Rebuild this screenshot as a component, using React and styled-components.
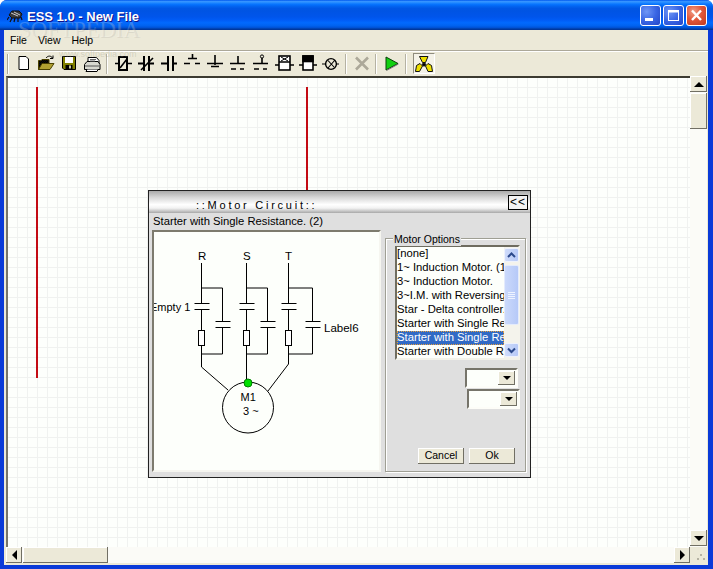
import React from "react";
import styled, { createGlobalStyle } from "styled-components";

const Global = createGlobalStyle`
  html, body { margin: 0; padding: 0; background: #fff; }
  * { box-sizing: border-box; }
  body { font: 11px "Liberation Sans", Arial, sans-serif; color: #000; }
`;

const Win = styled.div`
  position: relative;
  width: 713px;
  height: 569px;
  display: flex;
  flex-direction: column;
  background: #0a3ad8;
  border-radius: 7px 7px 0 0;
  overflow: hidden;
  padding-bottom: 4px;
`;
const TitleBar = styled.div`
  height: 30px;
  flex: none;
  display: flex;
  align-items: center;
  padding: 2px 6px 0 7px;
  background: linear-gradient(180deg,#0058ee 0,#3593ff 5%,#288eff 8%,#127dff 12%,#036ffc 16%,#0262ee 22%,#0057e5 28%,#0054e3 36%,#0055eb 56%,#005bf5 66%,#026afe 76%,#0062ef 86%,#0052d6 92%,#0040ab 96%,#003092 100%);
`;
const TitleText = styled.span`
  margin-left: 4px;
  font: bold 13px "Liberation Sans", sans-serif;
  color: #fff;
  text-shadow: 1px 1px #0f1089;
`;
const WinButtons = styled.div`
  margin-left: auto;
  margin-top: -2px;
  display: flex;
  gap: 2px;
`;
const WinButton = styled.div`
  width: 21px;
  height: 21px;
  border: 1px solid #fff;
  border-radius: 3px;
  display: flex;
  background: ${(p) =>
    p.$close
      ? "radial-gradient(circle at 35% 30%, #f0a08a 0, #e2583a 45%, #c03a1e 100%)"
      : "radial-gradient(circle at 30% 30%, #6f96f5 0, #3a66e4 50%, #2346c8 100%)"};
`;
const Client = styled.div`
  flex: 1;
  margin: 0 5px 0 4px;
  min-height: 0;
  background: #ece9d8;
  display: flex;
  flex-direction: column;
`;
const MenuBar = styled.div`
  height: 20px;
  flex: none;
  display: flex;
  align-items: center;
  gap: 11px;
  padding-left: 6px;
  font-size: 10.5px;
`;
const MenuItem = styled.span``;
const Rule = styled.div`
  height: 2px;
  flex: none;
  background: #aca899;
  border-bottom: 1px solid #fff;
`;
const Toolbar = styled.div`
  height: 24px;
  flex: none;
  display: flex;
  align-items: stretch;
  padding-left: 2px;
`;
const Grip = styled.div`
  width: 2px;
  margin: 2px 3px 2px 1px;
  background: #aca899;
  border-right: 1px solid #fff;
`;
const Tool = styled.div`
  width: 23px;
  height: 22px;
  flex: none;
  svg { display: block; }
`;
const Sep = styled.div`
  width: 2px;
  margin: 2px ${(p) => p.$r}px 2px ${(p) => p.$l}px;
  background: #b5b2a3;
  border-right: 1px solid #fff;
  flex: none;
`;
const Toggle = styled.div`
  width: 22px;
  height: 21px;
  margin-left: 3px;
  margin-top: 1px;
  flex: none;
  border: 1px solid;
  border-color: #8f8c7e #fff #fff #8f8c7e;
  background: #f4f2e8;
  svg { display: block; }
`;
const Workspace = styled.div`
  flex: 1;
  min-height: 0;
  display: grid;
  grid-template-columns: 1fr 17px;
  grid-template-rows: 1fr 16px;
  padding: 0 1px 2px 2px;
`;
const Canvas = styled.div`
  position: relative;
  border-top: 2px solid #3c3a30;
  border-left: 2px solid #77756a;
  background-color: #fdfffc;
  background-image: linear-gradient(#f0f2f0 1px, transparent 1px), linear-gradient(90deg, #f0f2f0 1px, transparent 1px);
  background-size: 10px 10px;
  background-position: 9px 9px;
`;
const RedWire = styled.div`
  position: absolute;
  left: ${(p) => p.$x}px;
  top: 9px;
  width: 2px;
  height: ${(p) => p.$h}px;
  background: #c40c14;
`;
const VScroll = styled.div`
  display: flex;
  flex-direction: column;
  background: #fbfbf7;
  padding-bottom: 1px;
`;
const HScroll = styled.div`
  display: flex;
  background: #fbfbf7;
`;
const SBtn = styled.div`
  flex: none;
  width: ${(p) => p.$w}px;
  height: ${(p) => p.$h}px;
  margin-top: ${(p) => p.$mt || 0}px;
  margin-left: ${(p) => p.$ml || 0}px;
  background: #ece9d8;
  box-shadow: inset -1px -1px #716f64, inset 1px 1px #fff;
  display: flex;
  align-items: center;
  justify-content: center;
`;
const Corner = styled.div`
  background: #ece9d8;
  svg { display: block; }
`;
const Arrow = styled.div`
  width: 0;
  height: 0;
  border-style: solid;
  ${(p) =>
    ({
      up: "border-width:0 5px 5px 5px;border-color:transparent transparent #000 transparent;",
      down: "border-width:5px 5px 0 5px;border-color:#000 transparent transparent transparent;",
      left: "border-width:5px 5px 5px 0;border-color:transparent #000 transparent transparent;",
      right: "border-width:5px 0 5px 5px;border-color:transparent transparent transparent #000;",
    })[p.$d]}
`;
const Watermark = styled.div`
  position: absolute;
  left: 18px;
  top: 17px;
  font: 23px "Liberation Serif", serif;
  letter-spacing: -0.3px;
  color: rgba(255, 255, 255, 0.2);
  text-shadow: 1px 1px rgba(110, 110, 110, 0.14);
  pointer-events: none;
`;
const WatermarkUrl = styled.div`
  position: absolute;
  left: 59px;
  top: 49px;
  font: 9px "Liberation Sans", sans-serif;
  color: rgba(150, 150, 130, 0.3);
`;

const Dialog = styled.div`
  position: absolute;
  left: 148px;
  top: 190px;
  width: 383px;
  height: 288px;
  border: 1px solid #222;
  background: #dfdfdf;
  display: flex;
  flex-direction: column;
`;
const DlgTitle = styled.div`
  height: 22px;
  flex: none;
  display: flex;
  align-items: center;
  padding: 0 2px 0 47px;
  background: linear-gradient(180deg, #aaaaaa 0, #d8d8d8 30%, #ffffff 62%, #f2f2f2 78%, #a8a8a8 100%);
`;
const DlgTitleText = styled.span`
  font-size: 11px;
  letter-spacing: 2.75px;
  margin-top: 6px;
`;
const Collapse = styled.div`
  margin-left: auto;
  width: 20px;
  height: 15px;
  border: 1px solid #000;
  background: #f3f3f3;
  font-size: 12px;
  line-height: 12px;
  letter-spacing: 1px;
  text-align: center;
`;
const SubTitle = styled.div`
  height: 17px;
  flex: none;
  padding-left: 4px;
  line-height: 16px;
  font-size: 11.25px;
`;
const DlgBody = styled.div`
  flex: 1;
  display: flex;
  padding-left: 3px;
`;
const Panel = styled.div`
  width: 229px;
  height: 242px;
  flex: none;
  border: 2px solid;
  border-color: #7d7b6e #f6f6f0 #f6f6f0 #7d7b6e;
  background: #fdfffb;
  svg { display: block; }
`;
const Group = styled.div`
  position: relative;
  width: 141px;
  height: 234px;
  margin: 8px 0 0 4px;
  border: 1px solid #9f9f94;
  box-shadow: 1px 1px #fff, inset 1px 1px #fff;
  display: flex;
  flex-direction: column;
`;
const Legend = styled.span`
  position: absolute;
  left: 7px;
  top: -6px;
  padding: 0 1px;
  background: #dfdfdf;
  font-size: 10.5px;
  line-height: 13px;
`;
const ListBox = styled.div`
  width: 125px;
  height: 115px;
  margin: 6px 0 0 9px;
  flex: none;
  display: flex;
  border: 2px solid;
  border-color: #6f6d60 #f3f3ea #f3f3ea #6f6d60;
  background: #fdfffb;
`;
const Rows = styled.div`
  width: 107px;
  flex: none;
  overflow: hidden;
`;
const Row = styled.div`
  height: 14px;
  line-height: 13px;
  white-space: nowrap;
  overflow: hidden;
  font-size: 11.25px;
  ${(p) => p.$sel && "background:#316ac5;color:#fff;outline:1px dotted #e8a03c;outline-offset:-1px;"}
`;
const XPBar = styled.div`
  flex: 1;
  display: flex;
  flex-direction: column;
  padding: 1px 1px 1px 0;
  background: #f4f3ec;
`;
const XPBtn = styled.div`
  height: 14px;
  flex: none;
  border-radius: 2px;
  border: 1px solid #eef2fd;
  background: linear-gradient(90deg, #cfdcfb, #b7c9f7);
  display: flex;
  svg { display: block; }
`;
const XPThumb = styled.div`
  height: 60px;
  margin-top: 3px;
  flex: none;
  border-radius: 2px;
  border: 1px solid #e4ebfc;
  background: linear-gradient(90deg, #cbd9fb, #b6c9f8);
  display: flex;
  align-items: center;
  justify-content: center;
  svg { display: block; }
`;
const Spacer = styled.div`
  flex: 1;
`;
const Combo = styled.div`
  width: 53px;
  height: 20px;
  flex: none;
  align-self: flex-end;
  margin-top: ${(p) => p.$mt}px;
  margin-right: ${(p) => p.$mr}px;
  display: flex;
  justify-content: flex-end;
  padding: 1px;
  border: 2px solid;
  border-color: #76746a #fdfdf8 #fdfdf8 #76746a;
  background: #fdfffb;
`;
const ComboBtn = styled.div`
  width: 17px;
  background: #ece9d8;
  box-shadow: inset -1px -1px #716f64, inset 1px 1px #fff;
  display: flex;
  align-items: center;
  justify-content: center;
`;
const Small = styled(Arrow)`
  border-width: 4px 4px 0 4px;
`;
const Buttons = styled.div`
  margin-top: auto;
  display: flex;
  justify-content: flex-end;
  gap: 5px;
  padding: 0 10px 7px 0;
`;
const Btn = styled.div`
  width: 46px;
  height: 16px;
  background: #ece9d8;
  box-shadow: inset -1px -1px #716f64, inset 1px 1px #fff;
  text-align: center;
  line-height: 15px;
  font-size: 10.5px;
`;

/* Toolbar drawings use screen coordinates inside each viewBox. */
const Ico = ({ x, w = 23, children }) => (
  <svg width={w} height="22" viewBox={`${x} 52 ${w} 22`} fill="none" stroke="#000" strokeWidth="1">
    {children}
  </svg>
);

const tools = [
  [12, <path d="M19 56.5H26L28.5 59V69.5H19Z" fill="#fff" />],
  [35, <g>
    <pattern id="dither" width="2" height="2" patternUnits="userSpaceOnUse">
      <rect width="2" height="2" fill="#f4e860" />
      <rect width="1" height="1" fill="#a89c20" />
      <rect x="1" y="1" width="1" height="1" fill="#a89c20" />
    </pattern>
    <path d="M38.5 69.5V60.5H41L42 59.5H49V69.5Z" fill="url(#dither)" stroke="#4a4200" />
    <path d="M38.5 69.5L42 63.5H54L50 69.5Z" fill="#b0a030" stroke="#4a4200" />
    <path d="M46 58C48 55.5 51 55.5 52.5 58M53 55.5V58.5H50" stroke="#000" />
  </g>],
  [58, <g>
    <path d="M62.5 56.5H75.5V69.5H64L62.5 68Z" fill="#808000" stroke="#000" />
    <rect x="65" y="57" width="8" height="6" fill="#fff" stroke="none" />
    <rect x="65.5" y="65" width="7" height="4.5" fill="#000" stroke="none" />
    <rect x="69" y="65.5" width="2" height="3" fill="#c8c8a0" stroke="none" />
  </g>],
  [81, <g>
    <path d="M88 57.5H96.5L99 60.5V64H88Z" fill="#fff" />
    <path d="M84.5 64.5L87 61.5H98L100 64.5V69.5H84.5Z" fill="#d8d8d0" />
    <path d="M87 69.5L86 71.5H97L98 69.5" fill="#fff" />
    <path d="M85 66H99" stroke="#555" />
    <path d="M90 59.5H96M90 61H95" stroke="#666" />
  </g>],
  [111, <g strokeWidth="2">
    <rect x="119" y="57" width="8" height="13" />
    <path d="M115 63.5H119M127 63.5H132M120 68L127 59" strokeWidth="1.6" />
  </g>],
  [134, <g strokeWidth="2">
    <path d="M144 56V71M149 56V71M138 63.5H144M149 63.5H154" />
    <path d="M141 70L153 58" strokeWidth="1.6" />
  </g>],
  [157, <g strokeWidth="2">
    <path d="M168 56V71M173 56V71M161 63.5H168M173 63.5H177" />
  </g>],
  [180, <g strokeWidth="1.6">
    <path d="M192.5 54V58M188 58.5H197M184 63.5H190M195 63.5H200" />
  </g>],
  [203, <g strokeWidth="1.6">
    <path d="M215 55V65M207 63.5H223" />
    <path d="M211 66.5H219" />
  </g>],
  [226, <g strokeWidth="1.6">
    <path d="M238 56V64M230 63.5H245M231 69H236M240 69H244" />
  </g>],
  [249, <g strokeWidth="1.6">
    <circle cx="262" cy="56.5" r="1.6" strokeWidth="1" />
    <path d="M262 58V64M253 63.5H268M254 69H259M263 69H267" />
  </g>],
  [272, <g strokeWidth="1.6">
    <rect x="279" y="56" width="11" height="14" fill="#fff" />
    <path d="M279 62H290M275 65H279M290 65H294" />
    <path d="M281 57L288 61M288 57L281 61" strokeWidth="1" />
  </g>],
  [295, <g strokeWidth="1.6">
    <rect x="303" y="56" width="10" height="14" fill="#fff" />
    <rect x="303" y="56" width="10" height="5.5" fill="#000" />
    <path d="M299 65H303M313 65H317" />
  </g>],
  [318, <g strokeWidth="1.4">
    <circle cx="331" cy="64" r="5.4" />
    <path d="M322 64H325.5M336.5 64H339M328 68L335 60M328 60.5L334 67" strokeWidth="1.1" />
  </g>],
];

const TopWinIcon = () => (
  <svg width="16" height="14" viewBox="0 0 16 14" fill="none">
    <path d="M2 6L5 2H12L15 5L13 9H5Z" fill="#3a3a3a" stroke="#111" />
    <path d="M4 4L11 7M7 3L13 6" stroke="#c8c8c8" />
    <path d="M2 8L0 11M5 9L3 13M8 9L7 13M11 9L11 13M14 8L15 11" stroke="#111" strokeWidth="1.2" />
  </svg>
);

const Chevron = ({ up }) => (
  <svg width="13" height="12" viewBox="0 0 13 12" fill="none" stroke="#2c4a8c" strokeWidth="2">
    <path d={up ? "M3 8L6.5 4.5L10 8" : "M3 4.5L6.5 8L10 4.5"} />
  </svg>
);

const MotorLeg = ({ x, rx, res, lower }) => (
  <g>
    <path d={`M${x} 263V303M${x} 309V330M${x} 345.5V354M${x} 288H${rx}V321M${rx} 327V354H${x}`} />
    <path d={`M${x - 7} 303.5H${x + 8}M${x - 7} 309.5H${x + 8}M${rx - 7} 321.5H${rx + 8}M${rx - 7} 327.5H${rx + 8}`} />
    <rect x={res} y="330.5" width="6" height="15" fill="#fff" />
    {lower}
  </g>
);

const options = [
  "[none]",
  "1~ Induction Motor. (1 Phase)",
  "3~ Induction Motor.",
  "3~I.M. with Reversing",
  "Star - Delta controller.",
  "Starter with Single Resistance. (1)",
  "Starter with Single Resistance. (2)",
  "Starter with Double Resistance",
];

export default function App() {
  return (
    <Win>
      <Global />
      <TitleBar>
        <TopWinIcon />
        <TitleText>ESS 1.0 - New File</TitleText>
        <WinButtons>
          <WinButton>
            <svg width="19" height="19" viewBox="0 0 19 19"><rect x="4" y="12" width="8" height="3" fill="#fff" /></svg>
          </WinButton>
          <WinButton>
            <svg width="19" height="19" viewBox="0 0 19 19" fill="none" stroke="#fff"><rect x="4.5" y="4.5" width="10" height="10" /><path d="M4 5.5H15" strokeWidth="2" /></svg>
          </WinButton>
          <WinButton $close>
            <svg width="19" height="19" viewBox="0 0 19 19" fill="none" stroke="#fff" strokeWidth="2.4"><path d="M5 4.5L14 14M14 4.5L5 14" /></svg>
          </WinButton>
        </WinButtons>
      </TitleBar>
      <Watermark>SOFTPEDIA</Watermark>
      <Client>
        <MenuBar>
          <MenuItem>File</MenuItem>
          <MenuItem>View</MenuItem>
          <MenuItem>Help</MenuItem>
        </MenuBar>
        <Rule />
        <Toolbar>
          <Grip />
          {tools.slice(0, 4).map(([x, g]) => (
            <Tool key={x}><Ico x={x}>{g}</Ico></Tool>
          ))}
          <Sep $l={2} $r={3} />
          {tools.slice(4).map(([x, g]) => (
            <Tool key={x}><Ico x={x}>{g}</Ico></Tool>
          ))}
          <Sep $l={4} $r={3} />
          <Tool>
            <Ico x={350}>
              <path d="M356 57.5L368 69.5M368 57.5L356 69.5" stroke="#aca899" strokeWidth="2.6" />
            </Ico>
          </Tool>
          <Sep $l={2} $r={3} />
          <Tool>
            <Ico x={380}>
              <path d="M386 57L398 63.5L386 70Z" fill="#10d010" stroke="#0a400a" />
              <path d="M386.5 70.5L398.5 64" stroke="#777" />
            </Ico>
          </Tool>
          <Sep $l={2} $r={3} />
          <Toggle>
            <svg width="20" height="19" viewBox="414 54 20 19" stroke="#111" strokeWidth="1">
              <path d="M419.5 56.5H428L425.5 62.5H422.5Z" fill="#eee000" />
              <path d="M422.5 66L419.5 71.5H415.5L416.5 65.5L420 63.5Z" fill="#eee000" />
              <path d="M425.5 66L428 71.5H432.5L431.5 65.5L428 63.5Z" fill="#eee000" />
              <circle cx="424" cy="64.5" r="1.6" fill="#000" />
            </svg>
          </Toggle>
        </Toolbar>
        <Workspace>
          <Canvas>
            <RedWire $x={28} $h={291} />
            <RedWire $x={298} $h={103} />
          </Canvas>
          <VScroll>
            <SBtn $w={17} $h={16}><Arrow $d="up" /></SBtn>
            <SBtn $w={17} $h={36} $mt={1} />
            <Spacer />
            <SBtn $w={17} $h={16}><Arrow $d="down" /></SBtn>
          </VScroll>
          <HScroll>
            <SBtn $w={16} $h={16}><Arrow $d="left" /></SBtn>
            <SBtn $w={85} $h={16} $ml={1} />
            <Spacer />
            <SBtn $w={16} $h={16}><Arrow $d="right" /></SBtn>
          </HScroll>
          <Corner>
            <svg width="17" height="16" viewBox="0 0 17 16" fill="#b5b2a3">
              <rect x="10" y="7" width="2" height="2" />
              <rect x="7" y="11" width="2" height="2" />
              <rect x="13" y="11" width="2" height="2" />
            </svg>
          </Corner>
        </Workspace>
      </Client>
      <WatermarkUrl>www.softpedia.com</WatermarkUrl>
      <Dialog>
        <DlgTitle>
          <DlgTitleText>::Motor Circuit::</DlgTitleText>
          <Collapse>&lt;&lt;</Collapse>
        </DlgTitle>
        <SubTitle>Starter with Single Resistance. (2)</SubTitle>
        <DlgBody>
          <Panel>
            <svg width="225" height="238" viewBox="154 232 225 238" fill="none" stroke="#000" strokeWidth="1">
              <MotorLeg x={201.5} rx={222.5} res={198.5} lower={<path d="M201.5 354V367L228 390" />} />
              <MotorLeg x={246.5} rx={267.5} res={243.5} lower={<path d="M246.5 354V383" />} />
              <MotorLeg x={288.5} rx={312.5} res={285.5} lower={<path d="M288.5 354V364L268 391" />} />
              <circle cx="248" cy="407.5" r="25.5" fill="#fdfffb" />
              <circle cx="248" cy="383" r="4" fill="#00e000" stroke="#008000" />
              <g fill="#000" stroke="none" fontFamily="Liberation Sans, sans-serif" fontSize="11.5">
                <text x="198" y="260">R</text>
                <text x="243" y="260">S</text>
                <text x="285" y="260">T</text>
                <text x="150" y="311" fontSize="11">Empty 1</text>
                <text x="324" y="332">Label6</text>
                <text x="240.5" y="401" fontSize="11">M1</text>
                <text x="243" y="415" fontSize="11">3 ~</text>
              </g>
            </svg>
          </Panel>
          <Group>
            <Legend>Motor Options</Legend>
            <ListBox>
              <Rows>
                {options.map((o, i) => (
                  <Row key={o} $sel={i === 6}>{o}</Row>
                ))}
              </Rows>
              <XPBar>
                <XPBtn><Chevron up /></XPBtn>
                <XPThumb>
                  <svg width="7" height="7" viewBox="0 0 7 7" stroke="#eef3ff"><path d="M0 .5H7M0 2.5H7M0 4.5H7M0 6.5H7" /></svg>
                </XPThumb>
                <Spacer />
                <XPBtn><Chevron /></XPBtn>
              </XPBar>
            </ListBox>
            <Combo $mt={8} $mr={7}><ComboBtn><Small $d="down" /></ComboBtn></Combo>
            <Combo $mt={1} $mr={5}><ComboBtn><Small $d="down" /></ComboBtn></Combo>
            <Buttons>
              <Btn>Cancel</Btn>
              <Btn>Ok</Btn>
            </Buttons>
          </Group>
        </DlgBody>
      </Dialog>
    </Win>
  );
}
